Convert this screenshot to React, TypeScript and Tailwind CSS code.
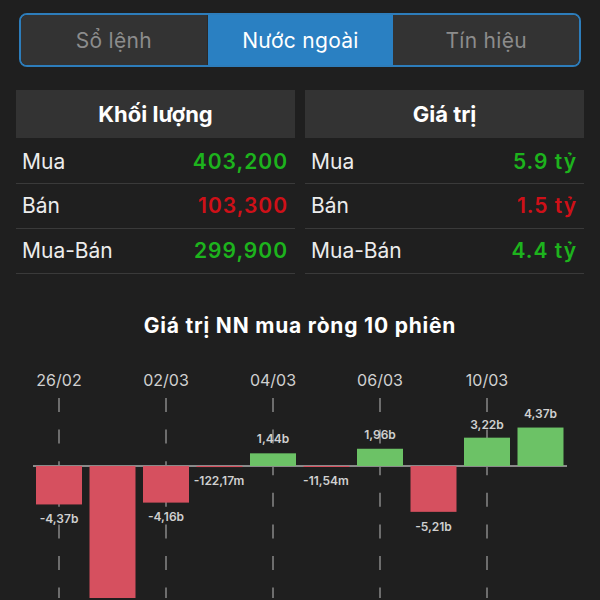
import React from "react";

const tabs = ["Sổ lệnh", "Nước ngoài", "Tín hiệu"];

const volRows = [
  { label: "Mua", value: "403,200", color: "text-[#1db31d]" },
  { label: "Bán", value: "103,300", color: "text-[#cf1018]" },
  { label: "Mua-Bán", value: "299,900", color: "text-[#1db31d]" },
];

const valRows = [
  { label: "Mua", value: "5.9 tỷ", color: "text-[#1db31d]" },
  { label: "Bán", value: "1.5 tỷ", color: "text-[#cf1018]" },
  { label: "Mua-Bán", value: "4.4 tỷ", color: "text-[#1db31d]" },
];

// y positions in page coordinates, chart starts at page y = 340
const BASE = 468;
const SCALE = 8.8;
const bars = [
  { v: -4.37, label: "-4,37b", ly: 522 },
  { v: -20, label: "", ly: 0 },
  { v: -4.16, label: "-4,16b", ly: 520 },
  { v: -0.122, label: "-122,17m", ly: 484, lx: 219 },
  { v: 1.44, label: "1,44b", ly: 442 },
  { v: -0.0115, label: "-11,54m", ly: 484, lx: 326 },
  { v: 1.96, label: "1,96b", ly: 438 },
  { v: -5.21, label: "-5,21b", ly: 530 },
  { v: 3.22, label: "3,22b", ly: 428 },
  { v: 4.37, label: "4,37b", ly: 417 },
];
const dates = ["26/02", "02/03", "04/03", "06/03", "10/03"];

function Table({ title, rows }: { title: string; rows: typeof volRows }) {
  return (
    <div className="flex flex-col">
      <div className="h-[48px] bg-[#333333] flex items-center justify-center text-[22px] font-bold text-white">
        {title}
      </div>
      {rows.map((r, i) => (
        <div
          key={r.label}
          className={`${i === 0 ? "h-[46px] pt-[2px]" : "h-[45px]"} border-b border-[#3a3a3a] flex items-center justify-between pl-[6px] pr-[7px] text-[21px]`}
        >
          <span className="text-[#ececec]">{r.label}</span>
          <span className={`${r.color} font-semibold tracking-[1px]`}>{r.value}</span>
        </div>
      ))}
    </div>
  );
}

function Chart() {
  return (
    <svg width={600} height={260} viewBox="0 340 600 260" className="block">
      {dates.map((d, i) => {
        const x = 59 + i * 107;
        return (
          <g key={d}>
            <line x1={x} x2={x} y1={400} y2={600} stroke="#767676" strokeWidth={1.8} strokeDasharray="14 17.6" />
            <text x={x} y={384} fill="#d0d0d0" fontSize={16} textAnchor="middle" dominantBaseline="middle">
              {d}
            </text>
          </g>
        );
      })}
      <line x1={33} x2={567} y1={BASE} y2={BASE} stroke="#8a8a8a" strokeWidth={2} />
      {bars.map((b, i) => {
        const x = 36 + i * 53.5;
        const h = Math.max(Math.abs(b.v) * SCALE, 1);
        const y = b.v >= 0 ? BASE - h : BASE;
        return (
          <rect key={i} x={x} y={y} width={46} height={h} fill={b.v >= 0 ? "#6cc266" : "#d6505f"} />
        );
      })}
      {bars.map((b, i) =>
        b.label ? (
          <text
            key={"l" + i}
            x={b.lx ?? 59 + i * 53.5}
            y={b.ly}
            fill="#d0d0d0"
            fontSize={12}
            fontWeight={600}
            textAnchor="middle"
            dominantBaseline="middle"
          >
            {b.label}
          </text>
        ) : null
      )}
    </svg>
  );
}

export default function App() {
  return (
    <div
      className="w-[600px] h-[600px] overflow-hidden bg-[#1f1f1f] flex flex-col"
      style={{ fontFamily: "Inter, 'Noto Sans', sans-serif" }}
    >
      <div className="mt-[13px] mx-[19px] h-[54px] rounded-[8px] border-2 border-[#2d7dbb] overflow-hidden flex">
        {tabs.map((t, i) => (
          <div
            key={t}
            className={`flex-1 flex items-center justify-center text-[21px] tracking-[0.3px] pt-[1px] ${
              i === 1 ? "bg-[#2a80c2] text-white" : "bg-[#333333] text-[#8c8c8c]"
            } ${i === 0 ? "border-r border-[#2a2a2a]" : ""}`}
          >
            {t}
          </div>
        ))}
      </div>

      <div className="mt-[23px] px-[16px] grid grid-cols-2 gap-[10px]">
        <Table title="Khối lượng" rows={volRows} />
        <Table title="Giá trị" rows={valRows} />
      </div>

      <div className="mt-[40px] text-center text-white font-bold text-[21px] leading-[24px] tracking-[0.8px]">
        Giá trị NN mua ròng 10 phiên
      </div>
      <Chart />
    </div>
  );
}
